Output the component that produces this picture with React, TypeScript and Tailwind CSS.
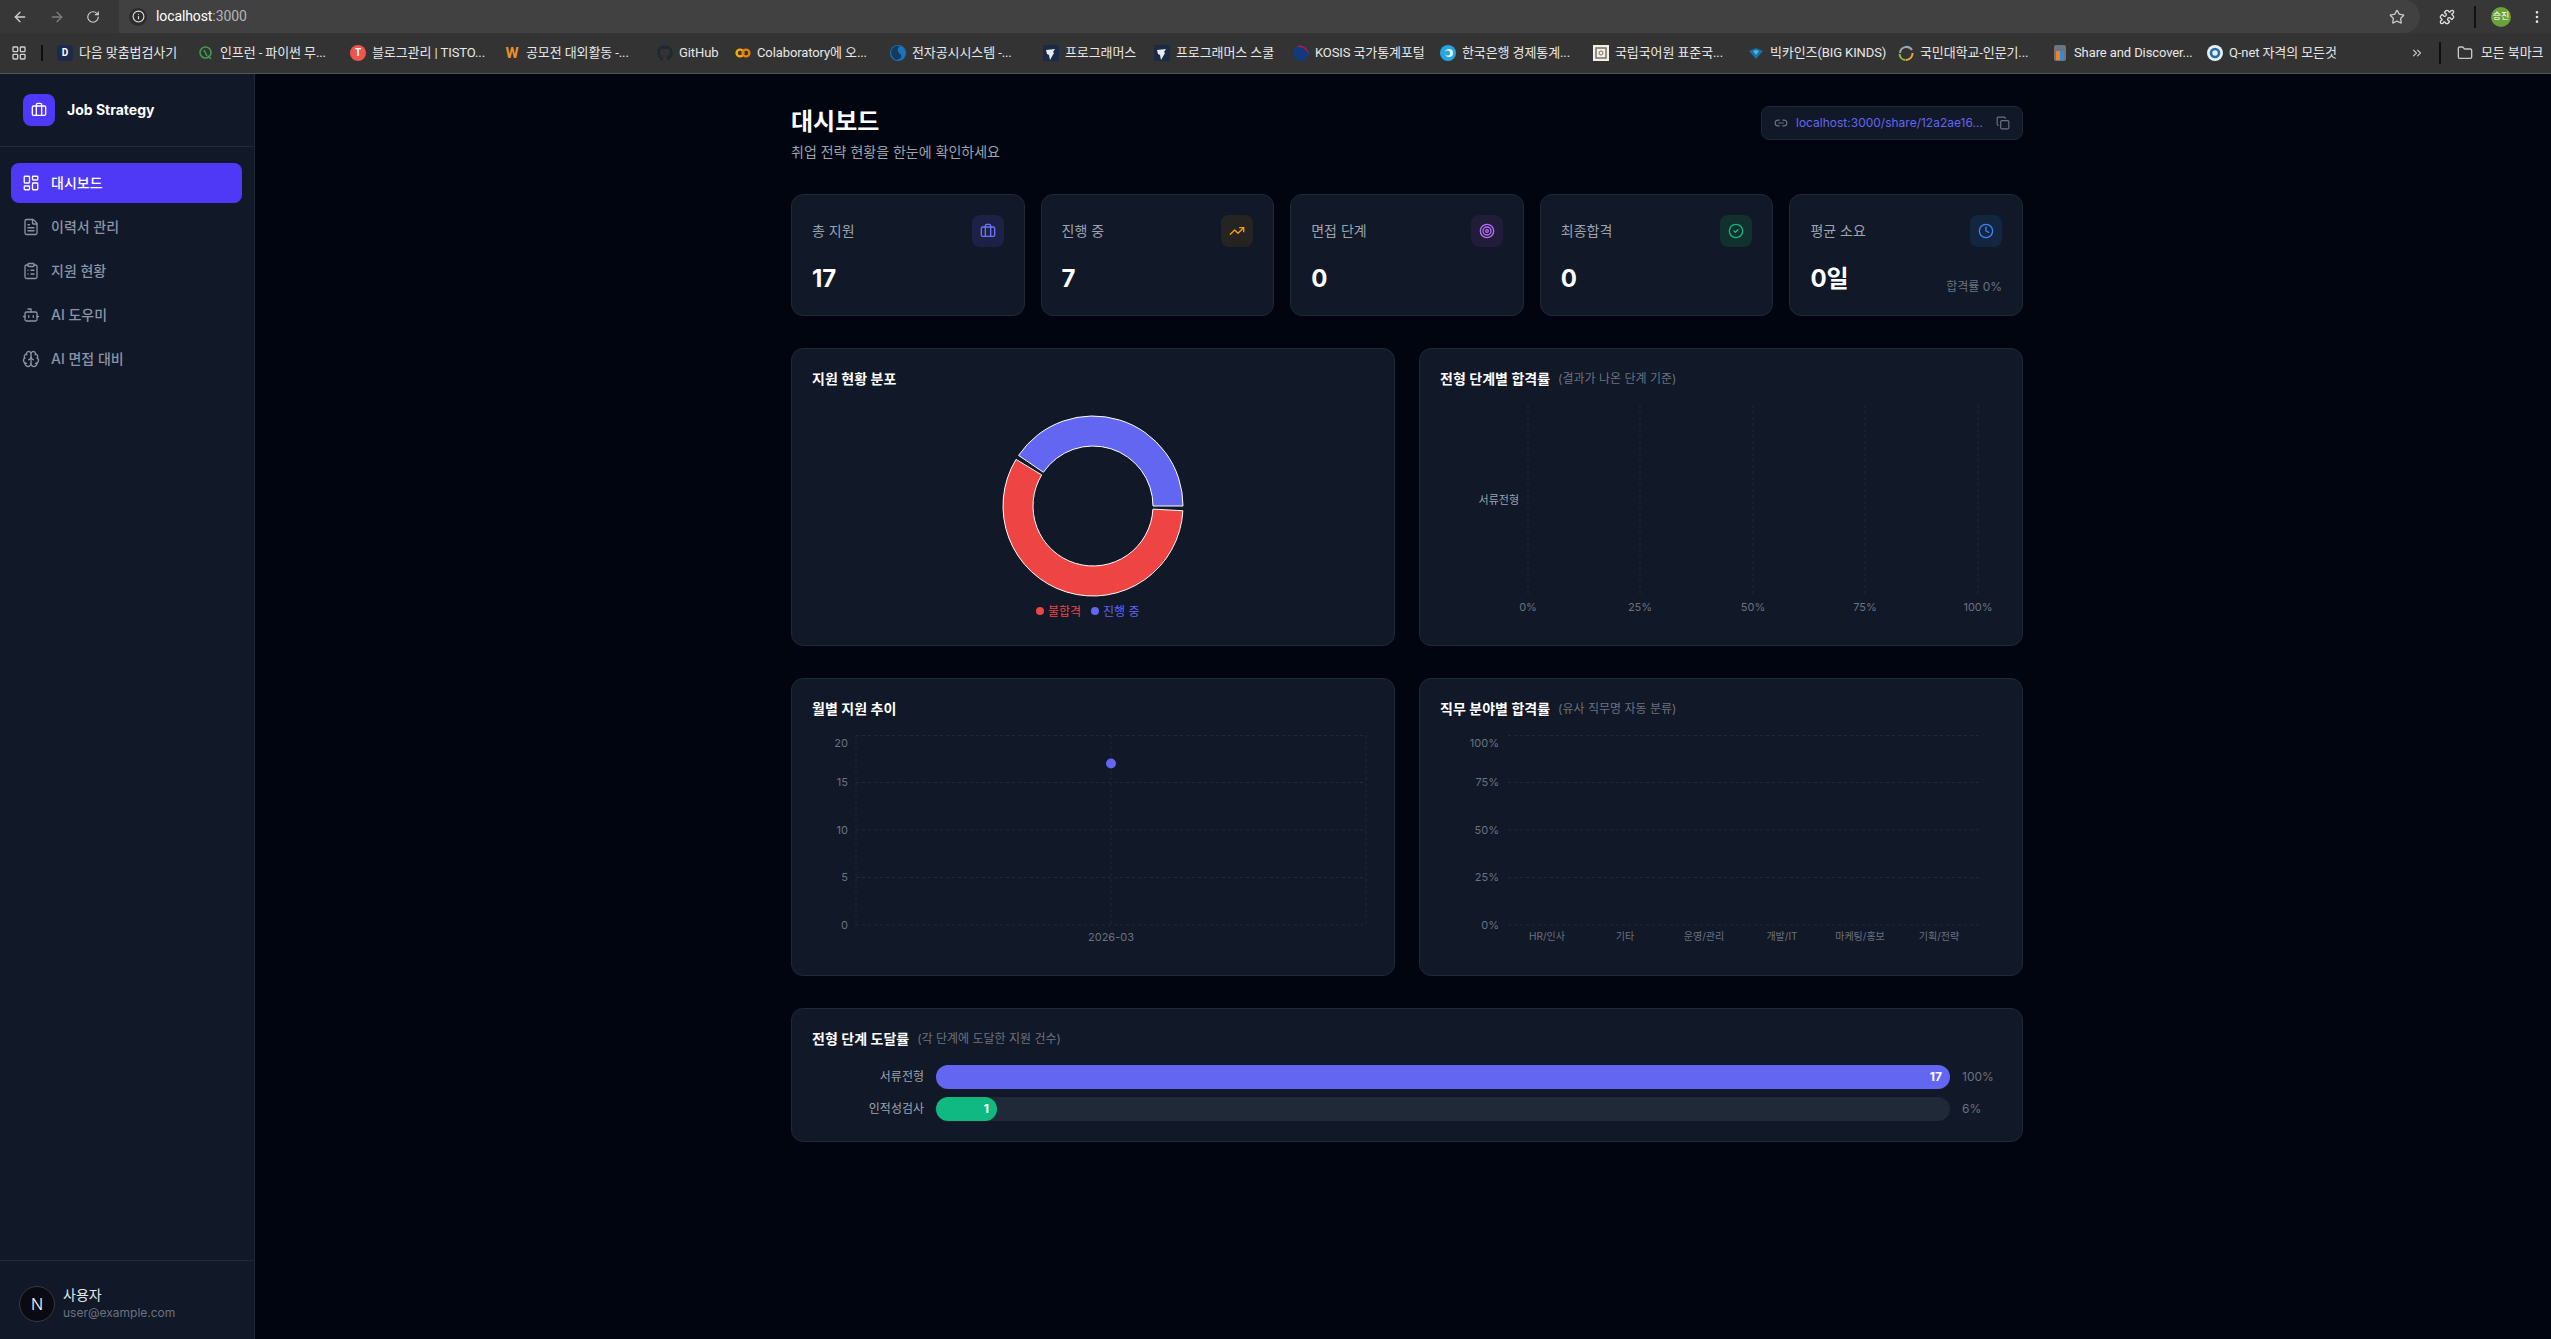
import React from "react";
import {
  ArrowLeft, ArrowRight, RotateCw, Info, Star, Puzzle, MoreVertical, LayoutGrid, ChevronsRight, Folder,
  Briefcase, LayoutDashboard, FileText, ClipboardList, Bot, Brain, TrendingUp, Target, CircleCheck, Clock, Link2, Copy,
} from "lucide-react";
import { FaGithub } from "react-icons/fa";

const FONT = "font-['Inter','Noto_Sans_CJK_KR',sans-serif]";

function Dot({ className, children }: { className: string; children?: React.ReactNode }) {
  return (
    <span className={"w-4 h-4 shrink-0 flex items-center justify-center text-[10px] font-bold leading-none " + className}>
      {children}
    </span>
  );
}

function Pg() {
  return (
    <svg width="16" height="16" viewBox="0 0 16 16" className="shrink-0">
      <rect width="16" height="18" fill="#1b2a45" />
      <path d="M3 5l9-1-2 3 1 1-4 7-1-5-2-1z" fill="#e6ebf2" />
    </svg>
  );
}

const bookmarks: { w: string; text: string; icon: React.ReactNode }[] = [
  { w: "w-[141px]", text: "다음 맞춤법검사기", icon: <Dot className="bg-[#1c2a4f] text-white rounded-sm">D</Dot> },
  {
    w: "w-[152px]",
    text: "인프런 - 파이썬 무...",
    icon: (
      <svg width="16" height="16" viewBox="0 0 16 16" className="shrink-0" fill="none" stroke="#3f9b4f" strokeWidth="1.6">
        <circle cx="7.5" cy="7.5" r="5.5" />
        <path d="M6 5l3 6M10 11l3 3" />
      </svg>
    ),
  },
  { w: "w-[154px]", text: "블로그관리 | TISTO...", icon: <Dot className="bg-[#f0544f] text-white rounded-full text-[8px]">T</Dot> },
  { w: "w-[153px]", text: "공모전 대외활동 -...", icon: <Dot className="text-[#e8912d] text-[15px]">W</Dot> },
  { w: "w-[78px]", text: "GitHub", icon: <FaGithub size={16} className="text-[#1f2933] shrink-0" /> },
  {
    w: "w-[155px]",
    text: "Colaboratory에 오...",
    icon: (
      <svg width="16" height="16" viewBox="0 0 16 16" className="shrink-0" fill="none" stroke="#f9ab00" strokeWidth="2.4">
        <circle cx="5" cy="8" r="3.4" />
        <circle cx="11" cy="8" r="3.4" stroke="#e8810c" />
      </svg>
    ),
  },
  {
    w: "w-[153px]",
    text: "전자공시시스템 -...",
    icon: (
      <svg width="16" height="16" viewBox="0 0 16 16" className="shrink-0">
        <circle cx="8" cy="8" r="8" fill="#1c74b8" />
        <path d="M2 4a8 8 0 0 1 8-3c-3 2-3 6 0 8s1 6-4 6A8 8 0 0 1 2 4z" fill="#123a63" />
      </svg>
    ),
  },
  { w: "w-[111px]", text: "프로그래머스", icon: <Pg /> },
  { w: "w-[139px]", text: "프로그래머스 스쿨", icon: <Pg /> },
  {
    w: "w-[147px]",
    text: "KOSIS 국가통계포털",
    icon: (
      <svg width="16" height="16" viewBox="0 0 16 16" className="shrink-0">
        <circle cx="8" cy="8" r="8" fill="#123a7a" />
        <path d="M3 2a8 8 0 0 1 12 9c1-6-6-10-12-9z" fill="#c8102e" />
      </svg>
    ),
  },
  {
    w: "w-[153px]",
    text: "한국은행 경제통계...",
    icon: (
      <svg width="16" height="16" viewBox="0 0 16 16" className="shrink-0">
        <circle cx="8" cy="8" r="8" fill="#25a6de" />
        <circle cx="9" cy="8" r="4" fill="#e6f6fc" />
        <circle cx="7.5" cy="8" r="2.6" fill="#25a6de" />
      </svg>
    ),
  },
  {
    w: "w-[155px]",
    text: "국립국어원 표준국...",
    icon: (
      <svg width="16" height="16" viewBox="0 0 16 16" className="shrink-0">
        <rect width="16" height="16" fill="#f1efe8" />
        <rect x="3" y="3" width="10" height="10" fill="none" stroke="#77705f" strokeWidth="1.5" />
        <circle cx="8" cy="8" r="2" fill="none" stroke="#77705f" />
      </svg>
    ),
  },
  {
    w: "w-[150px]",
    text: "빅카인즈(BIG KINDS)",
    icon: (
      <svg width="16" height="16" viewBox="0 0 16 16" className="shrink-0">
        <path d="M1 6l7-3 7 3-7 8z" fill="#1d6fa5" />
        <path d="M5 6l3-1 3 1-3 4z" fill="#3cc0dd" />
      </svg>
    ),
  },
  {
    w: "w-[154px]",
    text: "국민대학교-인문기...",
    icon: (
      <svg width="16" height="16" viewBox="0 0 16 16" className="shrink-0" fill="none" strokeWidth="2">
        <path d="M2 8a6.5 6.5 0 0 1 12 -3" stroke="#9aa5ad" />
        <path d="M1.5 9a6.5 6.5 0 0 0 6 6" stroke="#8fbf3f" />
        <path d="M8 15a6.5 6.5 0 0 0 6.5 -7" stroke="#e8a33d" />
      </svg>
    ),
  },
  {
    w: "w-[155px]",
    text: "Share and Discover...",
    icon: (
      <svg width="16" height="16" viewBox="0 0 16 16" className="shrink-0">
        <rect x="2" y="0" width="12" height="16" rx="2" fill="#6b7480" />
        <rect x="4" y="6" width="4" height="9" fill="#f48024" />
        <rect x="8" y="6" width="4" height="9" fill="#2a8fd8" />
      </svg>
    ),
  },
  {
    w: "w-[203px]",
    text: "Q-net 자격의 모든것",
    icon: (
      <svg width="16" height="16" viewBox="0 0 16 16" className="shrink-0">
        <circle cx="8" cy="8" r="8" fill="#e8eef3" />
        <circle cx="8" cy="8" r="4" fill="none" stroke="#1f6fa8" strokeWidth="2.6" />
      </svg>
    ),
  },
];

function BrowserChrome() {
  return (
    <div className="shrink-0 font-['Roboto','Noto_Sans_CJK_KR',sans-serif]">
      <div className="h-[33px] bg-[#373737] flex items-center text-[#c7c7c7]">
        <div className="w-[119px] flex items-center shrink-0">
          <ArrowLeft size={16} className="ml-3 text-[#d0d0d0]" />
          <ArrowRight size={16} className="ml-[21px] text-[#7d7d7d]" />
          <RotateCw size={14} className="ml-[21px] text-[#d0d0d0]" />
        </div>
        <div className="w-[2301px] h-[33px] bg-[#414141] rounded-r-full rounded-bl-2xl flex items-center shrink-0">
          <span className="ml-[10px] w-[18px] h-[18px] rounded-full bg-[#2c2c2c] flex items-center justify-center">
            <Info size={13} className="text-[#e2e2e2]" />
          </span>
          <span className="ml-[9px] text-[14px] tracking-[-0.1px] text-white">
            localhost<span className="text-[#b4b4b4]">:3000</span>
          </span>
          <Star size={16} className="ml-auto mr-[15px] text-[#c7c7c7]" />
        </div>
        <Puzzle size={16} className="ml-[19px] text-[#e2e2e2]" />
        <span className="ml-[19px] w-[2px] h-[22px] bg-[#111]" />
        <span className="ml-[15px] w-5 h-5 rounded-full bg-[#6aa23a] text-[9px] text-white flex items-center justify-center">승진</span>
        <MoreVertical size={16} className="ml-[18px] text-[#e2e2e2]" />
      </div>
      <div className="h-[41px] bg-[#333333] border-b border-[#555555] flex items-center text-[13px] tracking-[-0.1px] text-[#e8e8e8] whitespace-nowrap">
        <LayoutGrid size={16} className="ml-[11px] shrink-0 text-[#d0d0d0]" />
        <span className="ml-[14px] w-[2px] h-[16px] bg-[#0e0e0e] shrink-0" />
        <span className="w-[14px] shrink-0" />
        {bookmarks.map((b) => (
          <div key={b.text} className={"flex items-center gap-[6px] shrink-0 " + b.w}>
            {b.icon}
            <span>{b.text}</span>
          </div>
        ))}
        <ChevronsRight size={14} className="shrink-0 text-[#c7c7c7]" />
        <span className="ml-[15px] w-[2px] h-[22px] bg-[#0e0e0e] shrink-0" />
        <Folder size={16} className="ml-[16px] shrink-0 text-[#c7c7c7]" />
        <span className="ml-[8px] shrink-0">모든 북마크</span>
      </div>
    </div>
  );
}

const nav = [
  { label: "대시보드", Icon: LayoutDashboard, active: true },
  { label: "이력서 관리", Icon: FileText },
  { label: "지원 현황", Icon: ClipboardList },
  { label: "AI 도우미", Icon: Bot },
  { label: "AI 면접 대비", Icon: Brain },
];

function Sidebar() {
  return (
    <aside className="w-[255px] shrink-0 bg-[#111827] border-r border-[#1f2937] flex flex-col">
      <div className="h-[73px] shrink-0 border-b border-[#1f2937] flex items-center gap-3 pl-[23px]">
        <span className="w-8 h-8 rounded-lg bg-[#4f39f6] flex items-center justify-center">
          <Briefcase size={16} className="text-white" />
        </span>
        <span className="text-sm font-bold text-white">Job Strategy</span>
      </div>
      <nav className="flex flex-col gap-1 pl-[11px] pr-3 pt-[16px] flex-1">
        {nav.map(({ label, Icon, active }) => (
          <div
            key={label}
            className={
              "h-10 rounded-lg flex items-center gap-[11px] pl-[11px] text-sm font-medium " +
              (active ? "bg-[#4f39f6] text-white" : "text-[#8a94a6]")
            }
          >
            <Icon size={18} strokeWidth={1.75} className="shrink-0" />
            <span>{label}</span>
          </div>
        ))}
      </nav>
      <div className="h-[79px] shrink-0 border-t border-[#1f2937] flex items-center gap-2 pl-[19px] pt-[8px]">
        <span className="w-9 h-9 rounded-full bg-[#0a0a14] border border-[#3a3a3a] flex items-center justify-center text-white text-[16px] font-light">
          N
        </span>
        <div className="flex flex-col">
          <span className="text-sm leading-[18px] text-[#e5e7eb]">사용자</span>
          <span className="text-xs leading-[18px] text-[#6b7280]">user@example.com</span>
        </div>
      </div>
    </aside>
  );
}

const stats = [
  { label: "총 지원", value: "17", Icon: Briefcase, tile: "bg-[#1c2145] text-[#6f73f5]" },
  { label: "진행 중", value: "7", Icon: TrendingUp, tile: "bg-[#262423] text-[#f59e0b]" },
  { label: "면접 단계", value: "0", Icon: Target, tile: "bg-[#211c39] text-[#b76ef7]" },
  { label: "최종합격", value: "0", Icon: CircleCheck, tile: "bg-[#11302e] text-[#10b981]" },
  { label: "평균 소요", value: "0일", Icon: Clock, tile: "bg-[#14253f] text-[#3b82f6]", sub: "합격률 0%" },
];

function StatCard({ s }: { s: (typeof stats)[number] }) {
  const Icon = s.Icon;
  return (
    <div className="h-[122px] bg-[#111827] border border-[#1f2937] rounded-xl p-5">
      <div className="flex items-center justify-between mb-4">
        <span className="text-sm text-[#9ca3af]">{s.label}</span>
        <span className={"w-8 h-8 rounded-lg flex items-center justify-center " + s.tile}>
          <Icon size={16} />
        </span>
      </div>
      <div className="flex items-end justify-between">
        <span className="text-2xl font-bold text-white leading-8">{s.value}</span>
        {s.sub && <span className="text-xs text-[#6b7280]">{s.sub}</span>}
      </div>
    </div>
  );
}

function ChartCard({ title, sub, children }: { title: string; sub?: string; children: React.ReactNode }) {
  return (
    <div className="bg-[#111827] border border-[#1f2937] rounded-xl p-5">
      <div className="flex items-center gap-2 h-5 mb-4">
        <span className="text-sm font-semibold text-white">{title}</span>
        {sub && <span className="text-xs text-[#6b7280]">{sub}</span>}
      </div>
      <div className="h-[220px]">{children}</div>
    </div>
  );
}

const GRID = "#1f2937";
const TICK = "#6b7280";

function arc(cx: number, cy: number, ro: number, ri: number, a0: number, a1: number) {
  const p = (r: number, a: number) => {
    const t = (a * Math.PI) / 180;
    return `${(cx + r * Math.cos(t)).toFixed(2)} ${(cy - r * Math.sin(t)).toFixed(2)}`;
  };
  const large = a1 - a0 > 180 ? 1 : 0;
  return `M${p(ro, a0)}A${ro} ${ro} 0 ${large} 0 ${p(ro, a1)}L${p(ri, a1)}A${ri} ${ri} 0 ${large} 1 ${p(ri, a0)}Z`;
}

function Donut() {
  return (
    <svg width="562" height="220" viewBox="0 0 562 220">
      <path d={arc(281, 101, 90, 60, 0, 145.8)} fill="#6366f1" stroke="#fff" strokeWidth="1" />
      <path d={arc(281, 101, 90, 60, 148.8, 357)} fill="#ef4444" stroke="#fff" strokeWidth="1" />
      <circle cx="228" cy="206" r="4" fill="#ef4444" />
      <text x="236" y="210.5" fontSize="12" fill="#ef4444">불합격</text>
      <circle cx="283" cy="206" r="4" fill="#6366f1" />
      <text x="291" y="210.5" fontSize="12" fill="#6366f1">진행 중</text>
    </svg>
  );
}

function Tick({ x, y, anchor = "middle", size = 11, fill = TICK, children }: { x: number; y: number; anchor?: "middle" | "end"; size?: number; fill?: string; children: React.ReactNode }) {
  return (
    <text x={x} y={y + 4} fontSize={size} textAnchor={anchor} fill={fill}>
      {children}
    </text>
  );
}

function StageRate() {
  const xs = [88, 200, 313, 425, 538];
  const labels = ["0%", "25%", "50%", "75%", "100%"];
  return (
    <svg width="562" height="220" viewBox="0 0 562 220">
      {xs.map((x) => (
        <line key={x} x1={x} x2={x} y1={0} y2={190} stroke={GRID} strokeDasharray="3 3" />
      ))}
      <Tick x={79} y={95} anchor="end" fill="#9ca3af">서류전형</Tick>
      {xs.map((x, i) => (
        <Tick key={x} x={x} y={202}>{labels[i]}</Tick>
      ))}
    </svg>
  );
}

const hy = [0.5, 47.5, 95, 142.5, 190];

function Monthly() {
  const ly = [8, 47, 95, 142, 190];
  const labels = ["20", "15", "10", "5", "0"];
  return (
    <svg width="562" height="220" viewBox="0 0 562 220">
      {hy.map((y) => (
        <line key={y} x1={44} x2={554} y1={y} y2={y} stroke={GRID} strokeDasharray="3 3" />
      ))}
      {[44, 299, 554].map((x) => (
        <line key={x} x1={x} x2={x} y1={0} y2={190} stroke={GRID} strokeDasharray="3 3" />
      ))}
      {ly.map((y, i) => (
        <Tick key={y} x={36} y={y} anchor="end">{labels[i]}</Tick>
      ))}
      <Tick x={299} y={202}>2026-03</Tick>
      <circle cx="299" cy="28.5" r="5" fill="#6366f1" />
    </svg>
  );
}

function JobRate() {
  const ly = [8, 47, 95, 142, 190];
  const labels = ["100%", "75%", "50%", "25%", "0%"];
  const cats: [number, string][] = [[107, "HR/인사"], [185, "기타"], [264, "운영/관리"], [342, "개발/IT"], [420, "마케팅/홍보"], [499, "기획/전략"]];
  return (
    <svg width="562" height="220" viewBox="0 0 562 220">
      {hy.map((y) => (
        <line key={y} x1={68} x2={538.5} y1={y} y2={y} stroke={GRID} strokeDasharray="3 3" />
      ))}
      {ly.map((y, i) => (
        <Tick key={y} x={59} y={y} anchor="end">{labels[i]}</Tick>
      ))}
      {cats.map(([x, t]) => (
        <Tick key={t} x={x} y={201} size={10}>{t}</Tick>
      ))}
    </svg>
  );
}

function Funnel() {
  const rows = [
    { label: "서류전형", value: 17, pct: "100%", bar: "w-full bg-[#6366f1]" },
    { label: "인적성검사", value: 1, pct: "6%", bar: "w-[6%] bg-[#10b981]" },
  ];
  return (
    <div className="bg-[#111827] border border-[#1f2937] rounded-xl p-5">
      <div className="flex items-center gap-2 h-5 mb-4">
        <span className="text-sm font-semibold text-white">전형 단계 도달률</span>
        <span className="text-xs text-[#6b7280]">(각 단계에 도달한 지원 건수)</span>
      </div>
      <div className="flex flex-col gap-2">
        {rows.map((r) => (
          <div key={r.label} className="flex items-center gap-3">
            <span className="w-28 shrink-0 text-right text-xs text-[#9ca3af]">{r.label}</span>
            <div className="flex-1 h-6 rounded-full bg-[#1f2937]">
              <div className={"h-6 rounded-full flex items-center justify-end pr-2 text-xs font-bold text-white " + r.bar}>
                {r.value}
              </div>
            </div>
            <span className="w-10 shrink-0 text-xs text-[#6b7280]">{r.pct}</span>
          </div>
        ))}
      </div>
    </div>
  );
}

export default function App() {
  return (
    <div className={"w-[2551px] h-[1339px] overflow-hidden flex flex-col bg-[#01050f] " + FONT}>
      <BrowserChrome />
      <div className="flex flex-1 min-h-0">
        <Sidebar />
        <main className="flex-1 flex justify-center pl-2 pt-8">
          <div className="w-[1232px]">
            <div className="flex items-start justify-between mb-8">
              <div>
                <h1 className="text-2xl font-bold text-white leading-8">대시보드</h1>
                <p className="mt-1 text-sm text-[#9ca3af]">취업 전략 현황을 한눈에 확인하세요</p>
              </div>
              <div className="h-[34px] w-[262px] bg-[#111827] border border-[#1f2937] rounded-lg flex items-center px-3 gap-2">
                <Link2 size={14} className="text-[#6b7280] shrink-0" />
                <span className="text-xs text-[#6366f1] whitespace-nowrap flex-1">localhost:3000/share/12a2ae16...</span>
                <Copy size={14} className="text-[#6b7280] shrink-0" />
              </div>
            </div>
            <div className="grid grid-cols-5 gap-4 mb-8">
              {stats.map((s) => (
                <StatCard key={s.label} s={s} />
              ))}
            </div>
            <div className="grid grid-cols-2 gap-x-6 gap-y-8 mb-8">
              <ChartCard title="지원 현황 분포"><Donut /></ChartCard>
              <ChartCard title="전형 단계별 합격률" sub="(결과가 나온 단계 기준)"><StageRate /></ChartCard>
              <ChartCard title="월별 지원 추이"><Monthly /></ChartCard>
              <ChartCard title="직무 분야별 합격률" sub="(유사 직무명 자동 분류)"><JobRate /></ChartCard>
            </div>
            <Funnel />
          </div>
        </main>
      </div>
    </div>
  );
}
